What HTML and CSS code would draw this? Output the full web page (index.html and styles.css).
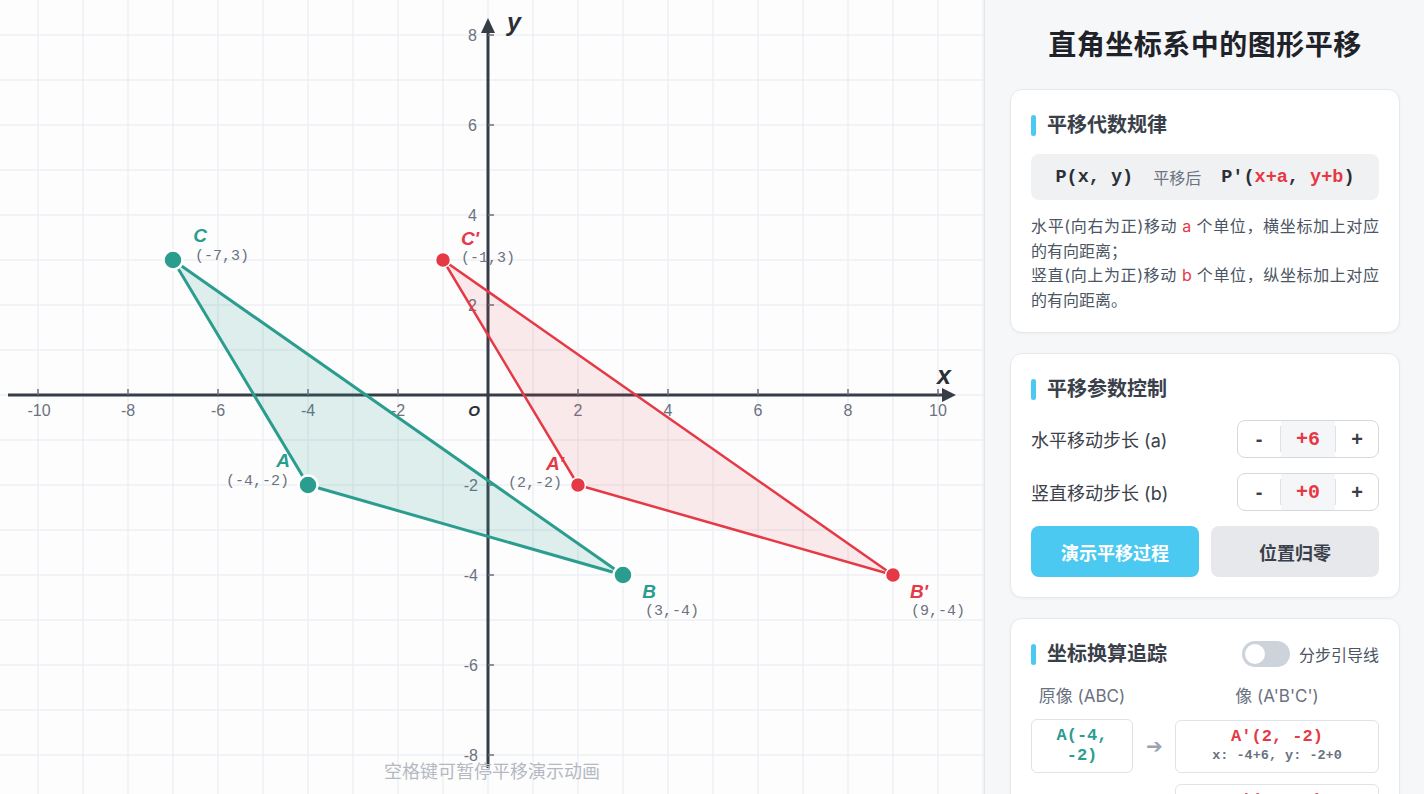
FILE: index.html
```html
<!DOCTYPE html>
<html lang="zh-CN">
<head>
<meta charset="utf-8">
<title>直角坐标系中的图形平移</title>
<link rel="stylesheet" href="styles.css">
</head>
<body>
<div class="app">
  <main class="stage">
    <svg class="plot" width="984" height="794" viewBox="0 0 984 794">
      <path class="grid" d="M38 0V794M83 0V794M128 0V794M173 0V794M218 0V794M263 0V794M308 0V794M353 0V794M398 0V794M443 0V794M488 0V794M533 0V794M578 0V794M623 0V794M668 0V794M713 0V794M758 0V794M803 0V794M848 0V794M893 0V794M938 0V794M983 0V794M0 35H984M0 80H984M0 125H984M0 170H984M0 215H984M0 260H984M0 305H984M0 350H984M0 395H984M0 440H984M0 485H984M0 530H984M0 575H984M0 620H984M0 665H984M0 710H984M0 755H984"/>
      <path class="axis" d="M8 395H946M488 768V30"/>
      <path class="arrow" d="M956 395L942 388L942 402Z M488 18L481 33L495 33Z"/>
      <path class="tick" d="M38 395V389M128 395V389M218 395V389M308 395V389M398 395V389M578 395V389M668 395V389M758 395V389M848 395V389M938 395V389M488 35H494M488 125H494M488 215H494M488 305H494M488 485H494M488 575H494M488 665H494M488 755H494"/>
      <g class="tick-label xl">
        <text x="39" y="410">-10</text><text x="128" y="410">-8</text><text x="218" y="410">-6</text><text x="308" y="410">-4</text><text x="398" y="410">-2</text>
        <text x="578" y="410">2</text><text x="668" y="410">4</text><text x="758" y="410">6</text><text x="848" y="410">8</text><text x="938" y="410">10</text>
      </g>
      <g class="tick-label yl">
        <text x="477" y="35">8</text><text x="477" y="125">6</text><text x="477" y="215">4</text><text x="477" y="305">2</text>
        <text x="478" y="485">-2</text><text x="478" y="575">-4</text><text x="478" y="665">-6</text><text x="478" y="755">-8</text>
      </g>
      <text class="origin" x="474" y="410">O</text>
      <text class="axis-name" x="944" y="375">x</text>
      <text class="axis-name" x="514" y="22">y</text>

      <polygon class="tri-orig" points="308,485 623,575 173,260"/>
      <polygon class="tri-img" points="578,485 893,575 443,260"/>

      <circle class="pt-orig" cx="308" cy="485" r="9.5"/>
      <circle class="pt-orig" cx="623" cy="575" r="9.5"/>
      <circle class="pt-orig" cx="173" cy="260" r="9.5"/>
      <circle class="pt-img" cx="578" cy="485" r="7.5"/>
      <circle class="pt-img" cx="893" cy="575" r="7.5"/>
      <circle class="pt-img" cx="443" cy="260" r="7.5"/>

      <g class="pname orig">
        <text x="283" y="460">A</text><text x="649" y="591">B</text><text x="200" y="235">C</text>
      </g>
      <g class="pname img">
        <text x="555" y="463">A'</text><text x="919" y="591">B'</text><text x="470" y="238">C'</text>
      </g>
      <g class="coord">
        <text x="195" y="256">(-7,3)</text>
        <text x="461" y="258">(-1,3)</text>
        <text class="end" x="289" y="481">(-4,-2)</text>
        <text class="end" x="562" y="483">(2,-2)</text>
        <text x="645" y="611">(3,-4)</text>
        <text x="911" y="611">(9,-4)</text>
      </g>
    </svg>
    <div class="hint">空格键可暂停平移演示动画</div>
  </main>

  <aside class="panel">
    <h1 class="panel-title">直角坐标系中的图形平移</h1>

    <section class="card">
      <h2 class="card-title"><span class="bar"></span>平移代数规律</h2>
      <div class="formula">
        <span class="f-code">P(x, y)</span>
        <span class="f-mid">平移后</span>
        <span class="f-code">P'(<span class="red">x+a</span>, <span class="red">y+b</span>)</span>
      </div>
      <p class="rule">水平(向右为正)移动 <span class="red">a</span> 个单位，横坐标加上对应的有向距离；<br>竖直(向上为正)移动 <span class="red">b</span> 个单位，纵坐标加上对应的有向距离。</p>
    </section>

    <section class="card">
      <h2 class="card-title"><span class="bar"></span>平移参数控制</h2>
      <div class="param-row">
        <span class="param-label">水平移动步长 (a)</span>
        <div class="stepper">
          <button class="step-btn">-</button>
          <i class="sep"></i>
          <span class="step-val">+6</span>
          <i class="sep"></i>
          <button class="step-btn">+</button>
        </div>
      </div>
      <div class="param-row">
        <span class="param-label">竖直移动步长 (b)</span>
        <div class="stepper">
          <button class="step-btn">-</button>
          <i class="sep"></i>
          <span class="step-val">+0</span>
          <i class="sep"></i>
          <button class="step-btn">+</button>
        </div>
      </div>
      <div class="actions">
        <button class="btn primary">演示平移过程</button>
        <button class="btn secondary">位置归零</button>
      </div>
    </section>

    <section class="card">
      <div class="card-head">
        <h2 class="card-title"><span class="bar"></span>坐标换算追踪</h2>
        <label class="toggle-wrap"><span class="toggle"><span class="knob"></span></span>分步引导线</label>
      </div>
      <div class="trace">
        <div class="trace-h">原像 (ABC)</div>
        <div></div>
        <div class="trace-h">像 (A'B'C')</div>

        <div class="src">A(-4, -2)</div>
        <div class="arr">➔</div>
        <div class="dst"><div class="dst-main">A'(2, -2)</div><div class="dst-sub">x: -4+6, y: -2+0</div></div>

        <div class="src">B(3, -4)</div>
        <div class="arr">➔</div>
        <div class="dst"><div class="dst-main">B'(9, -4)</div><div class="dst-sub">x: 3+6, y: -4+0</div></div>

        <div class="src">C(-7, 3)</div>
        <div class="arr">➔</div>
        <div class="dst"><div class="dst-main">C'(-1, 3)</div><div class="dst-sub">x: -7+6, y: 3+0</div></div>
      </div>
    </section>
  </aside>
</div>
</body>
</html>
```

FILE: styles.css
```css
* { box-sizing: border-box; }
html, body { margin: 0; padding: 0; }
body {
  width: 1424px;
  height: 794px;
  overflow: hidden;
  font-family: Inter, "Noto Sans CJK SC", sans-serif;
  background: #ffffff;
  color: #374151;
}
.app {
  display: flex;
  width: 1424px;
  height: 794px;
}
.stage {
  position: relative;
  width: 984px;
  height: 794px;
  flex: none;
  background: #fdfdfe;
  overflow: hidden;
}
.plot { display: block; }
.grid { stroke: #eef0f3; stroke-width: 1.5; fill: none; }
.axis { stroke: #373d47; stroke-width: 3; fill: none; }
.arrow { fill: #373d47; }
.tick { stroke: #6b7280; stroke-width: 1.5; }
.tick-label text {
  font-family: "Liberation Sans", Arial, sans-serif;
  font-size: 16px;
  fill: #6b7280;
  dominant-baseline: central;
}
.xl text { text-anchor: middle; }
.yl text { text-anchor: end; }
.origin {
  font-family: "Liberation Sans", Arial, sans-serif;
  font-size: 15px;
  font-weight: bold;
  font-style: italic;
  fill: #2b2f36;
  text-anchor: middle;
  dominant-baseline: central;
}
.axis-name {
  font-family: "Liberation Sans", Arial, sans-serif;
  font-size: 25px;
  font-weight: bold;
  font-style: italic;
  fill: #2b2f36;
  text-anchor: middle;
  dominant-baseline: central;
}
.tri-orig { fill: rgba(42, 157, 143, 0.15); stroke: #2a9d8f; stroke-width: 3; stroke-linejoin: round; }
.tri-img { fill: rgba(230, 57, 70, 0.1); stroke: #e63946; stroke-width: 2.5; stroke-linejoin: round; }
.pt-orig { fill: #2a9d8f; stroke: #ffffff; stroke-width: 2.5; }
.pt-img { fill: #e63946; stroke: #ffffff; stroke-width: 1.5; }
.pname text {
  font-family: "Liberation Sans", Arial, sans-serif;
  font-size: 19px;
  font-weight: bold;
  font-style: italic;
  text-anchor: middle;
  dominant-baseline: central;
}
.pname.orig text { fill: #2a9d8f; }
.pname.img text { fill: #e63946; }
.coord text {
  font-family: "Liberation Mono", "Courier New", monospace;
  font-size: 15px;
  fill: #6b7280;
  dominant-baseline: central;
}
.coord text.end { text-anchor: end; }
.hint {
  position: absolute;
  left: 0;
  right: 0;
  bottom: 10px;
  text-align: center;
  font-size: 18px;
  line-height: 24px;
  color: #b4b9c1;
}

/* panel */
.panel {
  width: 440px;
  height: 794px;
  flex: none;
  overflow: hidden;
  background: #f6f7f9;
  border-left: 1px solid #e4e6ea;
  padding: 24px 24px 0 25px;
  display: flex;
  flex-direction: column;
  gap: 20px;
}
.panel-title {
  margin: 0 0 3px;
  text-align: center;
  font-size: 28px;
  line-height: 42px;
  font-weight: 700;
  color: #1f2329;
  letter-spacing: 0.5px;
}
.card {
  flex: none;
  background: #ffffff;
  border: 1px solid #e6e8ec;
  border-radius: 12px;
  box-shadow: 0 1px 3px rgba(15, 23, 42, 0.04);
  padding: 20px;
}
.card-title {
  margin: 0;
  display: flex;
  align-items: center;
  gap: 11px;
  font-size: 20px;
  line-height: 30px;
  font-weight: 700;
  color: #3a4049;
}
.bar {
  width: 5px;
  height: 21px;
  border-radius: 3px;
  background: #4cc9f0;
}
.formula {
  margin-top: 14px;
  height: 46px;
  border-radius: 8px;
  background: #f0f1f3;
  display: flex;
  align-items: center;
  justify-content: center;
  gap: 20px;
}
.f-code {
  font-family: "Liberation Mono", "Courier New", monospace;
  font-size: 18.5px;
  font-weight: 700;
  color: #2b2f36;
  white-space: pre;
}
.f-mid {
  font-size: 16px;
  color: #6b7280;
}
.red { color: #e63946; }
.rule {
  margin: 14px 0 0;
  font-size: 16px;
  line-height: 24.5px;
  color: #4b5563;
  text-align: justify;
  text-align-last: left;
}
.param-row {
  margin-top: 16px;
  display: flex;
  align-items: center;
  justify-content: space-between;
}
.param-row + .param-row { margin-top: 15px; }
.param-label {
  font-size: 18px;
  color: #3a4049;
}
.stepper {
  width: 142px;
  height: 38px;
  border: 1px solid #d5d9df;
  border-radius: 8px;
  display: flex;
  align-items: center;
  overflow: hidden;
  background: #ffffff;
}
.step-btn {
  width: 42px;
  height: 100%;
  border: 0;
  background: transparent;
  font-family: "Liberation Sans", Arial, sans-serif;
  font-size: 20px;
  font-weight: 700;
  color: #3a4049;
  padding: 0;
}
.sep {
  width: 1px;
  height: 26px;
  background: #dfe2e6;
}
.step-val {
  width: 54px;
  height: 100%;
  background: #f5f6f8;
  display: flex;
  align-items: center;
  justify-content: center;
  font-family: "Liberation Mono", "Courier New", monospace;
  font-size: 20px;
  font-weight: 700;
  color: #e63946;
}
.actions {
  margin-top: 15px;
  display: grid;
  grid-template-columns: 1fr 1fr;
  gap: 12px;
}
.btn {
  height: 51px;
  border: 0;
  border-radius: 8px;
  font-family: Inter, "Noto Sans CJK SC", sans-serif;
  font-size: 18px;
  font-weight: 700;
}
.btn.primary { background: #4cc9f0; color: #ffffff; }
.btn.secondary { background: #e7e8eb; color: #3a4049; }
.card-head {
  display: flex;
  align-items: center;
  justify-content: space-between;
}
.toggle-wrap {
  display: flex;
  align-items: center;
  gap: 9px;
  font-size: 16px;
  color: #4b5563;
}
.toggle {
  width: 48px;
  height: 26px;
  border-radius: 13px;
  background: #cdd3db;
  display: flex;
  align-items: center;
  padding: 0 3px;
}
.knob {
  width: 20px;
  height: 20px;
  border-radius: 50%;
  background: #ffffff;
}
.trace {
  margin-top: 14px;
  display: grid;
  grid-template-columns: 102px 42px 204px;
  column-gap: 0;
  row-gap: 11px;
  align-items: center;
}
.trace-h {
  text-align: center;
  font-size: 17px;
  line-height: 26px;
  color: #6b7280;
  margin-bottom: -1px;
}
.src {
  border: 1px solid #dfe2e6;
  border-radius: 6px;
  padding: 6px 8px;
  text-align: center;
  font-family: "Liberation Mono", "Courier New", monospace;
  font-size: 17px;
  line-height: 20px;
  font-weight: 700;
  color: #2a9d8f;
}
.arr {
  text-align: center;
  font-size: 20px;
  color: #9ca3af;
}
.dst {
  border: 1px solid #dfe2e6;
  border-radius: 6px;
  padding: 6px 8px 7px;
  text-align: center;
}
.dst-main {
  font-family: "Liberation Mono", "Courier New", monospace;
  font-size: 17px;
  line-height: 20px;
  font-weight: 700;
  color: #e63946;
}
.dst-sub {
  font-family: "Liberation Mono", "Courier New", monospace;
  font-size: 13.5px;
  line-height: 18px;
  font-weight: 700;
  color: #6b7280;
}
```
